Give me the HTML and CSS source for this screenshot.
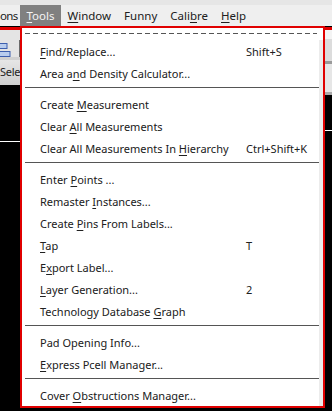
FILE: index.html
```html
<!DOCTYPE html>
<html lang="en">
<head>
    <meta charset="UTF-8">
    <meta name="viewport" content="width=device-width, initial-scale=1.0">
    <title>Tools menu</title>
    <link rel="stylesheet" href="styles.css">
</head>
<body>
    <div class="screen">
        <div class="title-strip"></div>
        <nav class="menubar">
            <span class="menubar-item first">ons</span>
            <span class="menubar-item active"><u>T</u>ools</span>
            <span class="menubar-item"><u>W</u>indow</span>
            <span class="menubar-item">Funny</span>
            <span class="menubar-item">Cali<u>b</u>re</span>
            <span class="menubar-item"><u>H</u>elp</span>
        </nav>

        <div class="workspace">
            <div class="dock-left">
                <div class="toolbar">
                    <svg class="layer-icon" width="12" height="15" viewBox="0 0 12 15">
                        <rect x="-4" y="0.5" width="11" height="5" fill="#b9cdee" stroke="#3d5fae"/>
                        <rect x="-4" y="8.5" width="14" height="5" fill="#b9cdee" stroke="#3d5fae"/>
                    </svg>
                    <span class="toolbar-sep"></span>
                </div>
                <div class="select-bar">Sele</div>
                <div class="canvas-left"></div>
            </div>
            <div class="dock-middle"></div>
            <div class="dock-right">
                <div class="right-top"></div>
                <div class="right-tabs"></div>
                <div class="right-panel"></div>
                <div class="canvas-right"></div>
            </div>
        </div>

        <div class="dropdown">
            <div class="tearoff"><div class="dash"></div></div>
            <div class="menu-list">
                <div class="item"><span><u>F</u>ind/Replace...</span><span>Shift+S</span></div>
                <div class="item"><span>Area a<u>n</u>d Density Calculator...</span><span></span></div>
                <div class="sep"></div>
                <div class="item"><span>Create <u>M</u>easurement</span><span></span></div>
                <div class="item"><span>Clear <u>A</u>ll Measurements</span><span></span></div>
                <div class="item"><span>Clear All Measurements In <u>H</u>ierarchy</span><span>Ctrl+Shift+K</span></div>
                <div class="sep"></div>
                <div class="item"><span>Enter <u>P</u>oints ...</span><span></span></div>
                <div class="item"><span>Remaster <u>I</u>nstances...</span><span></span></div>
                <div class="item"><span>Create <u>P</u>ins From Labels...</span><span></span></div>
                <div class="item"><span><u>T</u>ap</span><span>T</span></div>
                <div class="item"><span>E<u>x</u>port Label...</span><span></span></div>
                <div class="item"><span><u>L</u>ayer Generation...</span><span>2</span></div>
                <div class="item"><span>Technology Database <u>G</u>raph</span><span></span></div>
                <div class="sep"></div>
                <div class="item"><span>Pad Opening Info...</span><span></span></div>
                <div class="item"><span><u>E</u>xpress Pcell Manager...</span><span></span></div>
                <div class="sep"></div>
                <div class="item"><span>Cover <u>O</u>bstructions Manager...</span><span></span></div>
            </div>
        </div>
    </div>
</body>
</html>
```

FILE: styles.css
```css
body {
    margin: 0;
    padding: 0;
    background-color: #000;
}
u {
    text-decoration-thickness: 1px;
    text-underline-offset: 2px;
}
.screen {
    position: relative;
    width: 332px;
    height: 411px;
    overflow: hidden;
    background-color: #000;
    font-family: "Noto Sans", "Open Sans", sans-serif;
    font-size: 11px;
    color: #202020;
}
.title-strip {
    height: 5px;
    background-color: #e6e6e6;
}
.menubar {
    display: flex;
    height: 21px;
    background-color: #efefef;
    font-size: 11.5px;
}
.menubar-item {
    padding: 0 6.5px;
    line-height: 21px;
}
.menubar-item.first {
    width: 20px;
    padding: 0;
    letter-spacing: -0.6px;
}
.menubar-item.active {
    background-color: #808080;
    color: #f4f4f4;
}
.workspace {
    display: flex;
    height: 381px;
    margin-top: 1px;
    border-top: 3px solid #e00000;
    background-color: #d8d8d8;
}
.dock-left {
    display: flex;
    flex-direction: column;
    width: 20px;
    overflow: hidden;
}
.toolbar {
    display: flex;
    align-items: flex-start;
    justify-content: space-between;
    height: 27px;
    background-color: #e4e4e4;
    border-bottom: 3px solid #d0d0d0;
}
.layer-icon {
    margin-top: 13px;
}
.toolbar-sep {
    width: 1px;
    height: 17px;
    margin-top: 10px;
    background-color: #6a6a6a;
}
.select-bar {
    height: 25px;
    line-height: 23px;
    white-space: nowrap;
    letter-spacing: -0.3px;
    background: linear-gradient(#e6e6e6, #cfcfcf);
    color: #222;
}
.canvas-left {
    flex: 1;
    background: linear-gradient(#000 56px, #fff 56px, #fff 57px, #000 57px);
}
.dock-middle {
    flex: 1;
    background-color: #000;
}
.dock-right {
    display: flex;
    flex-direction: column;
    width: 7px;
}
.right-top {
    height: 9px;
    background-color: #f4f4f4;
}
.right-tabs {
    height: 22px;
    background-color: #dcdcdc;
    border-bottom: 3px solid #9a9a9a;
}
.right-panel {
    height: 28px;
    background-color: #e6e6e6;
    border-bottom: 3px solid #aaa;
}
.canvas-right {
    flex: 1;
    background: linear-gradient(#000 35px, #fff 35px, #fff 36px, #000 36px);
}
.dropdown {
    position: absolute;
    left: 20px;
    top: 26px;
    width: 301px;
    border: 2px solid #e00000;
    background-color: #fff;
}
.tearoff {
    height: 12px;
    padding: 5px 6px 0 3px;
    box-sizing: border-box;
}
.dash {
    height: 1px;
    background: repeating-linear-gradient(to right, #555 0 5px, transparent 5px 8px);
}
.menu-list {
    background: linear-gradient(to left, #ececec 4px, #fff 4px);
}
.item {
    display: grid;
    grid-template-columns: 206px auto;
    align-items: center;
    height: 22px;
    padding-left: 18px;
    white-space: nowrap;
}
.sep {
    height: 1px;
    margin: 3px 4px 5px 3px;
    background-color: #555;
}
```
